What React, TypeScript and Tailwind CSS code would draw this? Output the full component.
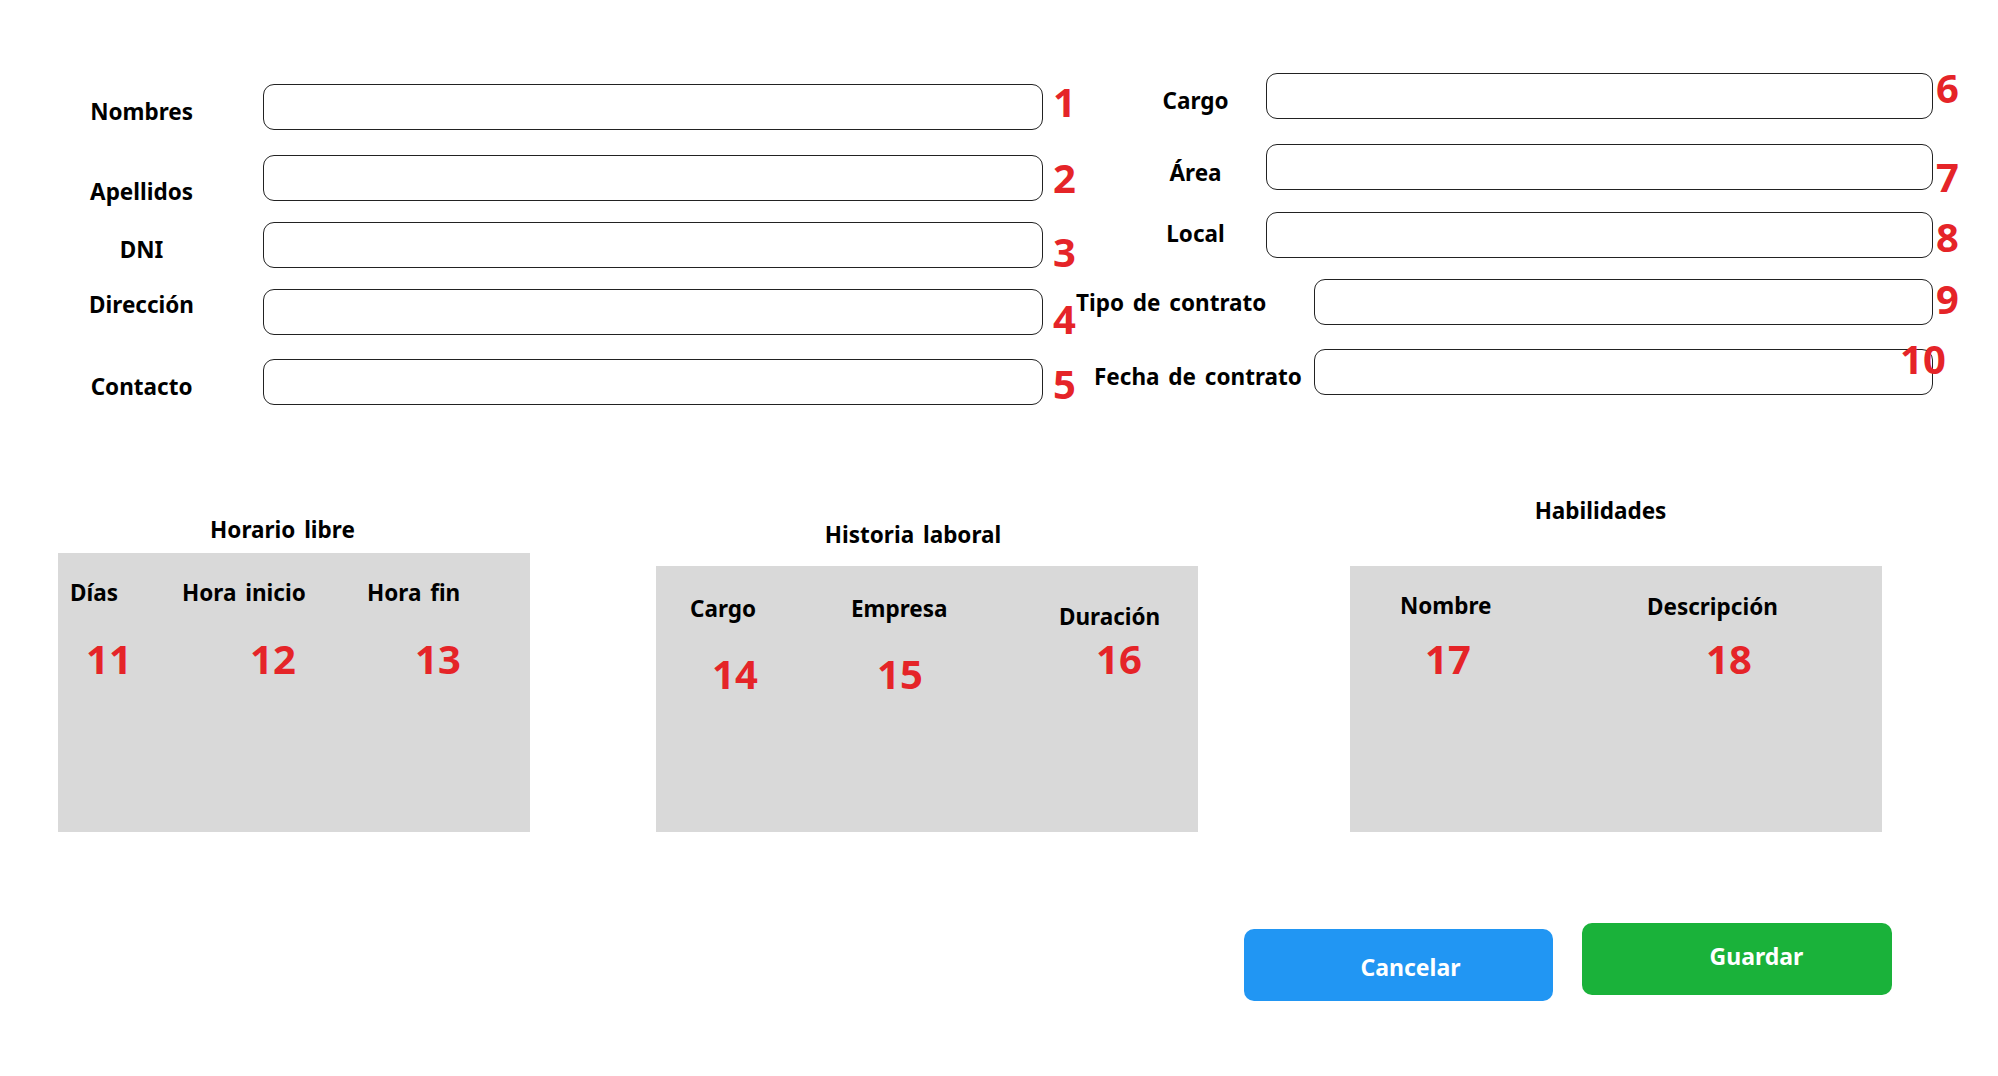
import React from 'react';

type LeftRow = { label: string; num: string; rowMt: string; labelMt: string; numMt: string };
type RightRow = LeftRow & { wrap: string; labelBox: string; inputW: string; numMl: string };

const leftRows: LeftRow[] = [
  { label: 'Nombres', num: '1', rowMt: 'mt-0', labelMt: 'mt-[17px]', numMt: 'mt-[-2px]' },
  { label: 'Apellidos', num: '2', rowMt: 'mt-[25px]', labelMt: 'mt-[26px]', numMt: 'mt-[3px]' },
  { label: 'DNI', num: '3', rowMt: 'mt-[21px]', labelMt: 'mt-[17px]', numMt: 'mt-[10px]' },
  { label: 'Dirección', num: '4', rowMt: 'mt-[21px]', labelMt: 'mt-[5px]', numMt: 'mt-[10px]' },
  { label: 'Contacto', num: '5', rowMt: 'mt-[24px]', labelMt: 'mt-[17px]', numMt: 'mt-[5px]' },
];

const rightRows: RightRow[] = [
  { label: 'Cargo', num: '6', rowMt: 'mt-0', labelMt: 'mt-[17px]', numMt: 'mt-[-5px]', wrap: 'pl-[49px]', labelBox: 'w-[141px] text-center', inputW: 'w-[667px]', numMl: 'ml-[3px]' },
  { label: 'Área', num: '7', rowMt: 'mt-[25px]', labelMt: 'mt-[18px]', numMt: 'mt-[13px]', wrap: 'pl-[49px]', labelBox: 'w-[141px] text-center', inputW: 'w-[667px]', numMl: 'ml-[3px]' },
  { label: 'Local', num: '8', rowMt: 'mt-[22px]', labelMt: 'mt-[11px]', numMt: 'mt-[5px]', wrap: 'pl-[49px]', labelBox: 'w-[141px] text-center', inputW: 'w-[667px]', numMl: 'ml-[3px]' },
  { label: 'Tipo de contrato', num: '9', rowMt: 'mt-[21px]', labelMt: 'mt-[13px]', numMt: 'mt-0', wrap: 'pl-0', labelBox: 'w-[238px] text-left', inputW: 'w-[619px]', numMl: 'ml-[3px]' },
  { label: 'Fecha de contrato', num: '10', rowMt: 'mt-[24px]', labelMt: 'mt-[17px]', numMt: 'mt-[-10px]', wrap: 'pl-[18px]', labelBox: 'w-[220px] text-left', inputW: 'w-[619px]', numMl: 'ml-[-33px]' },
];

const labelCls = 'text-[22.5px] leading-[22px] [word-spacing:3px] font-bold text-black whitespace-nowrap';
const numCls = 'text-[40px] leading-[40px] font-bold text-[#e52428] whitespace-nowrap';
const inputCls = 'h-[46px] shrink-0 rounded-[11px] border border-[#222] bg-white outline-none';

const Num: React.FC<{ n: string; className?: string }> = ({ n, className = '' }) => (
  <span className={`${numCls} ${className}`}>{n}</span>
);

export default function App() {
  return (
    <div className="w-[1998px] h-[1076px] bg-white font-['Noto_Sans',sans-serif] overflow-hidden">
      {/* datos personales y laborales */}
      <div className="flex h-[500px]">
        <div className="w-[1076px] shrink-0 pt-[84px] pl-[58px] flex flex-col">
          {leftRows.map(r => (
            <div key={r.num} className={`flex items-start h-[46px] ${r.rowMt}`}>
              <label className={`${labelCls} w-[170px] text-center ${r.labelMt}`}>{r.label}</label>
              <input className={`${inputCls} ml-[38px] w-[780px]`} />
              <Num n={r.num} className={`ml-[10px] ${r.numMt}`} />
            </div>
          ))}
        </div>
        <div className="flex-1 pt-[73px] flex flex-col">
          {rightRows.map(r => (
            <div key={r.num} className={`flex items-start h-[46px] ${r.rowMt} ${r.wrap}`}>
              <label className={`${labelCls} ${r.labelBox} ${r.labelMt}`}>{r.label}</label>
              <input className={`${inputCls} ${r.inputW}`} />
              <Num n={r.num} className={`${r.numMl} ${r.numMt}`} />
            </div>
          ))}
        </div>
      </div>

      {/* tablas */}
      <div className="flex items-end pl-[58px]">
        <div className="flex flex-col w-[472px]">
          <h2 className={`${labelCls} text-center pr-[23px]`}>Horario libre</h2>
          <div className="mt-[12px] h-[279px] bg-[#d9d9d9] pt-[29px]">
            <div className="flex pl-[12px]">
              <span className={`${labelCls} w-[112px]`}>Días</span>
              <span className={`${labelCls} w-[185px]`}>Hora inicio</span>
              <span className={labelCls}>Hora fin</span>
            </div>
            <div className="flex pl-[28px] mt-[35px]">
              <Num n="11" className="w-[164px]" />
              <Num n="12" className="w-[165px]" />
              <Num n="13" />
            </div>
          </div>
        </div>

        <div className="ml-[126px] flex flex-col w-[542px]">
          <h2 className={`${labelCls} text-center pr-[28px]`}>Historia laboral</h2>
          <div className="mt-[20px] h-[266px] bg-[#d9d9d9] flex items-start pl-[34px]">
            <div className="w-[161px] flex flex-col mt-[32px]">
              <span className={labelCls}>Cargo</span>
              <Num n="14" className="ml-[22px] mt-[34px]" />
            </div>
            <div className="w-[208px] flex flex-col mt-[32px]">
              <span className={labelCls}>Empresa</span>
              <Num n="15" className="ml-[26px] mt-[34px]" />
            </div>
            <div className="flex flex-col mt-[40px]">
              <span className={labelCls}>Duración</span>
              <Num n="16" className="ml-[37px] mt-[11px]" />
            </div>
          </div>
        </div>

        <div className="ml-[152px] flex flex-col w-[532px]">
          <h2 className={`${labelCls} text-center pr-[31px]`}>Habilidades</h2>
          <div className="mt-[44px] h-[266px] bg-[#d9d9d9] flex items-start pl-[50px]">
            <div className="w-[247px] flex flex-col mt-[29px]">
              <span className={labelCls}>Nombre</span>
              <Num n="17" className="ml-[25px] mt-[22px]" />
            </div>
            <div className="flex flex-col mt-[30px]">
              <span className={labelCls}>Descripción</span>
              <Num n="18" className="ml-[59px] mt-[21px]" />
            </div>
          </div>
        </div>
      </div>

      {/* acciones */}
      <div className="flex justify-end items-start gap-[29px] pr-[106px] mt-[91px]">
        <button className="mt-[6px] w-[309px] h-[72px] rounded-[10px] bg-[#2196f3] text-white text-[23px] leading-[23px] font-bold pl-[24px] pt-[4px]">
          Cancelar
        </button>
        <button className="w-[310px] h-[72px] rounded-[10px] bg-[#1ab23a] text-white text-[23px] leading-[23px] font-bold pl-[39px] pb-[6px]">
          Guardar
        </button>
      </div>
    </div>
  );
}
